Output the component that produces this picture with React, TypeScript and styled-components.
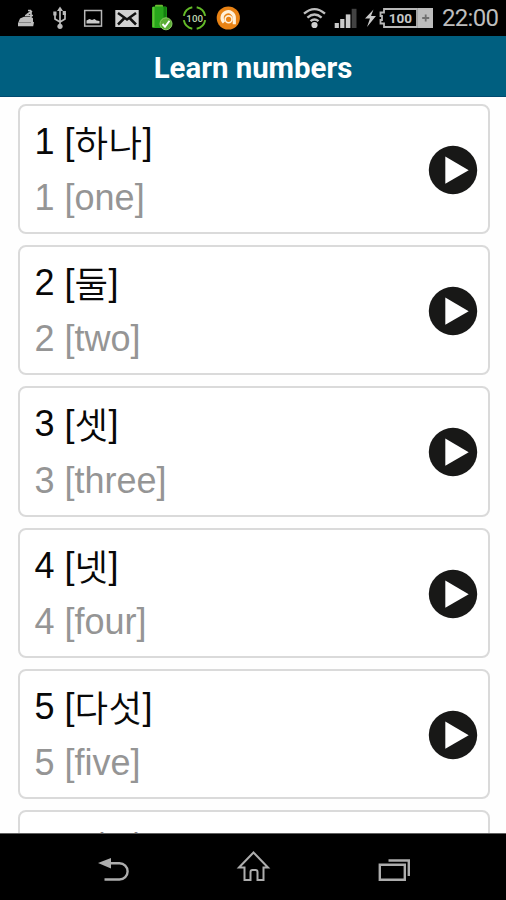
import React from 'react';
import styled, { createGlobalStyle } from 'styled-components';

const GlobalStyle = createGlobalStyle`
  html, body { margin: 0; padding: 0; background: #fff; }
  * { box-sizing: border-box; }
`;

const Screen = styled.div`
  width: 506px;
  height: 900px;
  display: flex;
  flex-direction: column;
  overflow: hidden;
  background: #fefefe;
  font-family: 'Liberation Sans', 'Noto Sans CJK KR', sans-serif;
`;

const StatusBar = styled.header`
  flex: none;
  height: 36px;
  display: flex;
  justify-content: space-between;
  background: #000;
`;

const StatusGroup = styled.div<{ $left?: number; $right?: number }>`
  display: flex;
  align-items: flex-start;
  padding-left: ${(p) => p.$left ?? 0}px;
  padding-right: ${(p) => p.$right ?? 0}px;
`;

const Icon = styled.svg<{ $gap?: number }>`
  display: block;
  flex: none;
  height: 36px;
  margin-right: ${(p) => p.$gap ?? 0}px;
`;

const Clock = styled.time`
  font: 400 24px/37px Roboto, sans-serif;
  letter-spacing: -0.7px;
  color: #bdbdbd;
  width: 58px;
  white-space: nowrap;
`;

const TitleBar = styled.h1`
  flex: none;
  height: 61px;
  margin: 0;
  display: flex;
  align-items: center;
  justify-content: center;
  background: #005f80;
  border-bottom: 1px solid #004a70;
  color: #fff;
  font: 700 29.4px/60px Roboto, sans-serif;
  padding-top: 3px;
`;

const List = styled.main`
  flex: 1;
  min-height: 0;
  overflow: hidden;
  display: flex;
  flex-direction: column;
  gap: 11px;
  padding: 6.6px 16px 0 17.5px;
`;

const Card = styled.article`
  flex: none;
  height: 130.35px;
  display: flex;
  align-items: center;
  justify-content: space-between;
  border: 2px solid #dadada;
  border-radius: 8px;
  padding: 0 10px 0 15px;
  background: #fff;
`;

const Words = styled.div`
  align-self: flex-start;
  padding-top: 8px;
`;

const Line = styled.p<{ $muted?: boolean }>`
  margin: 0;
  height: 56.5px;
  font-size: 36px;
  line-height: 56px;
  white-space: nowrap;
  color: ${(p) => (p.$muted ? '#959595' : '#080808')};
`;

const Hangul = styled.span`
  font-weight: 350;
  font-size: 36.5px;
  letter-spacing: 0.4px;
  line-height: 0;
  vertical-align: -3px;
`;

const PlayButton = styled.button`
  flex: none;
  width: 50px;
  height: 50px;
  padding: 0;
  border: 0;
  background: none;
  margin-top: 2px;
`;

const NavBar = styled.nav`
  flex: none;
  height: 67px;
  display: flex;
  justify-content: center;
  gap: 104px;
  padding-left: 2px;
  background: #000;
  border-top: 1px solid #606060;
`;

const NavIcon = styled.svg`
  display: block;
  width: 36px;
  height: 66px;
  fill: none;
  stroke: #adadad;
  stroke-width: 2.4;
`;

const entries = [
  ['1', '하나', 'one'],
  ['2', '둘', 'two'],
  ['3', '셋', 'three'],
  ['4', '넷', 'four'],
  ['5', '다섯', 'five'],
  ['6', '여섯', 'six'],
];

const Notifications = () => (
  <StatusGroup $left={16}>
    <Icon $gap={17} width="20" viewBox="16 0 20 36">
      <path d="M18 26.3v-3l2-4.8 4-1.8h7l2 1.5v3.6l1 .5-.8 4z" fill="#bebebe" />
      <path d="M26.5 15l5.5-4M31 12v5M28 10.5h3M25 15.5h8" stroke="#bebebe" strokeWidth="1.7" fill="none" />
      <path d="M18 22.5h13" stroke="#777" strokeWidth=".8" />
    </Icon>
    <Icon $gap={17} width="13" viewBox="53 0 13 36">
      <path d="M60 10v16M55 14v5l5 3M65 13v6l-5 3" fill="none" stroke="#bbb" strokeWidth="1.7" />
      <path d="M57 11l3-4.5 3 4.5z" fill="#bbb" />
      <circle cx="60" cy="26.3" r="2.6" fill="#bbb" />
      <rect x="53.3" y="11.5" width="3.2" height="4" fill="#bbb" />
      <rect x="62.7" y="11" width="3.2" height="4" fill="#bbb" />
    </Icon>
    <Icon $gap={12} width="20" viewBox="83 0 20 36">
      <rect x="84.7" y="10.5" width="16.8" height="15.6" fill="none" stroke="#b8b8b8" strokeWidth="1.5" />
      <path d="M86.5 23.5v-3l3-1.5 2.5 1 2.5-1 2 1.5 3 .5v2.5z" fill="#cacaca" />
    </Icon>
    <Icon $gap={12} width="24" viewBox="115 0 24 36">
      <rect x="115.3" y="10" width="23.4" height="17" fill="#d2d2d2" />
      <path d="M118 13l9 6.5 9-6.5M118 24.5l6-6M136 24.5l-6-6" fill="none" stroke="#111" strokeWidth="2.5" />
    </Icon>
    <Icon $gap={9} width="22" viewBox="151 0 22 36">
      <rect x="155" y="4.8" width="8" height="4" rx="1" fill="#6cbb35" />
      <rect x="152" y="6.5" width="15" height="21.5" rx="1.5" fill="#27a51b" />
      <path d="M153.5 7v20" stroke="#5dc434" strokeWidth="2" />
      <path d="M165 7v20" stroke="#148010" strokeWidth="3" />
      <circle cx="166" cy="23.8" r="6" fill="#5cae35" stroke="#8bcf64" />
      <path d="M162.5 24l2.5 2.8 4.5-6" fill="none" stroke="#fff" strokeWidth="1.9" />
    </Icon>
    <Icon $gap={9} width="25" viewBox="182 0 25 36">
      <path d="M196.7 7.3a10.9 10.9 0 0 1 8.5 8.6M205.2 20.1a10.9 10.9 0 0 1-8.5 8.6M192.3 28.7a10.9 10.9 0 0 1-8.5-8.6M183.8 15.9a10.9 10.9 0 0 1 8.5-8.6" fill="none" stroke="#63ba28" strokeWidth="2" />
      <text x="194.7" y="21.6" textAnchor="middle" fontFamily="Roboto" fontSize="9.8" fontWeight="500" fill="#bfd5ae">100</text>
    </Icon>
    <Icon width="25" viewBox="216 0 25 36">
      <circle cx="228.3" cy="18" r="11.6" fill="#e88214" />
      <path d="M224 22.3a6.1 6.1 0 1 1 10.3-4.3v6.3" fill="none" stroke="#fff0d9" strokeWidth="3.2" />
      <circle cx="228.6" cy="19.3" r="3.4" fill="#e88214" stroke="#fff0d9" strokeWidth="1.6" />
    </Icon>
  </StatusGroup>
);

const SystemStatus = () => (
  <StatusGroup $right={6}>
    <Icon $gap={7} width="24" viewBox="303 0 24 36">
      <g fill="none" stroke="#bebebe" strokeWidth="2.3">
        <path d="M304 13.7q10.5-9.2 21 0M307.4 17.6q7.1-6.2 14.2 0M310.5 21.2q4-3.5 8 0" />
      </g>
      <circle cx="314.5" cy="25" r="3.1" fill="#d0d0d0" />
    </Icon>
    <Icon $gap={7} width="23" viewBox="334 0 23 36">
      <rect x="334.7" y="23" width="4.2" height="5" fill="#c9c9c9" />
      <rect x="340.2" y="19" width="4.2" height="9" fill="#c9c9c9" />
      <rect x="345.8" y="14.4" width="4.6" height="13.6" fill="#c9c9c9" />
      <rect x="351.7" y="8.8" width="4.8" height="19.2" fill="#424242" />
    </Icon>
    <Icon $gap={1} width="14" viewBox="364 0 14 36">
      <path d="M373.5 9.5l-8.5 9h5l-3 8.5 9-11h-5z" fill="#cacaca" />
    </Icon>
    <Icon $gap={9} width="54" viewBox="379 0 54 36">
      <path d="M417 9h-33v3.5h-3.5v3.5h1.5v4h-1.5V23.5h3.5V27h33z" fill="none" stroke="#b8b8b8" strokeWidth="1.8" />
      <rect x="418" y="8" width="15" height="20" fill="#bdbdbd" />
      <path d="M425.7 14.5v7M422.2 18h7" stroke="#707070" strokeWidth="1.8" />
      <text x="400.3" y="23" textAnchor="middle" fontFamily="Roboto" fontWeight="700" fontSize="13.5" fill="#c7c7c7">100</text>
    </Icon>
    <Clock>22:00</Clock>
  </StatusGroup>
);

const PlayIcon = () => (
  <svg width="50" height="50" viewBox="0 0 50 50">
    <circle cx="25" cy="25" r="24.2" fill="#181817" />
    <path d="M17.3 11.6v27.2L40.7 25.2z" fill="#fff" />
  </svg>
);

const App = () => (
  <>
    <GlobalStyle />
    <Screen>
      <StatusBar>
        <Notifications />
        <SystemStatus />
      </StatusBar>
      <TitleBar>Learn numbers</TitleBar>
      <List>
        {entries.map(([digit, korean, english]) => (
          <Card key={digit}>
            <Words>
              <Line>{digit} [<Hangul>{korean}</Hangul>]</Line>
              <Line $muted>{digit} [{english}]</Line>
            </Words>
            <PlayButton aria-label={`Play ${english}`}>
              <PlayIcon />
            </PlayButton>
          </Card>
        ))}
      </List>
      <NavBar>
        <NavIcon viewBox="96 834 36 66">
          <path d="M109 863.3h10.5a8.1 8.1 0 0 1 0 16.2h-15" />
          <path d="M98 863l13-5v10.5z" fill="#adadad" stroke="none" />
        </NavIcon>
        <NavIcon viewBox="236 834 36 66">
          <path d="M239 867.5l14.5-15 14.5 15h-4.5v12.5h-6v-8q0-2-2-2h-3q-2 0-2 2v8h-6v-12.5z" strokeWidth="2" />
        </NavIcon>
        <NavIcon viewBox="376 834 36 66">
          <path d="M379.8 864.8h25v15h-25zM388.5 860.5h20.3v15.5" />
        </NavIcon>
      </NavBar>
    </Screen>
  </>
);

export default App;
